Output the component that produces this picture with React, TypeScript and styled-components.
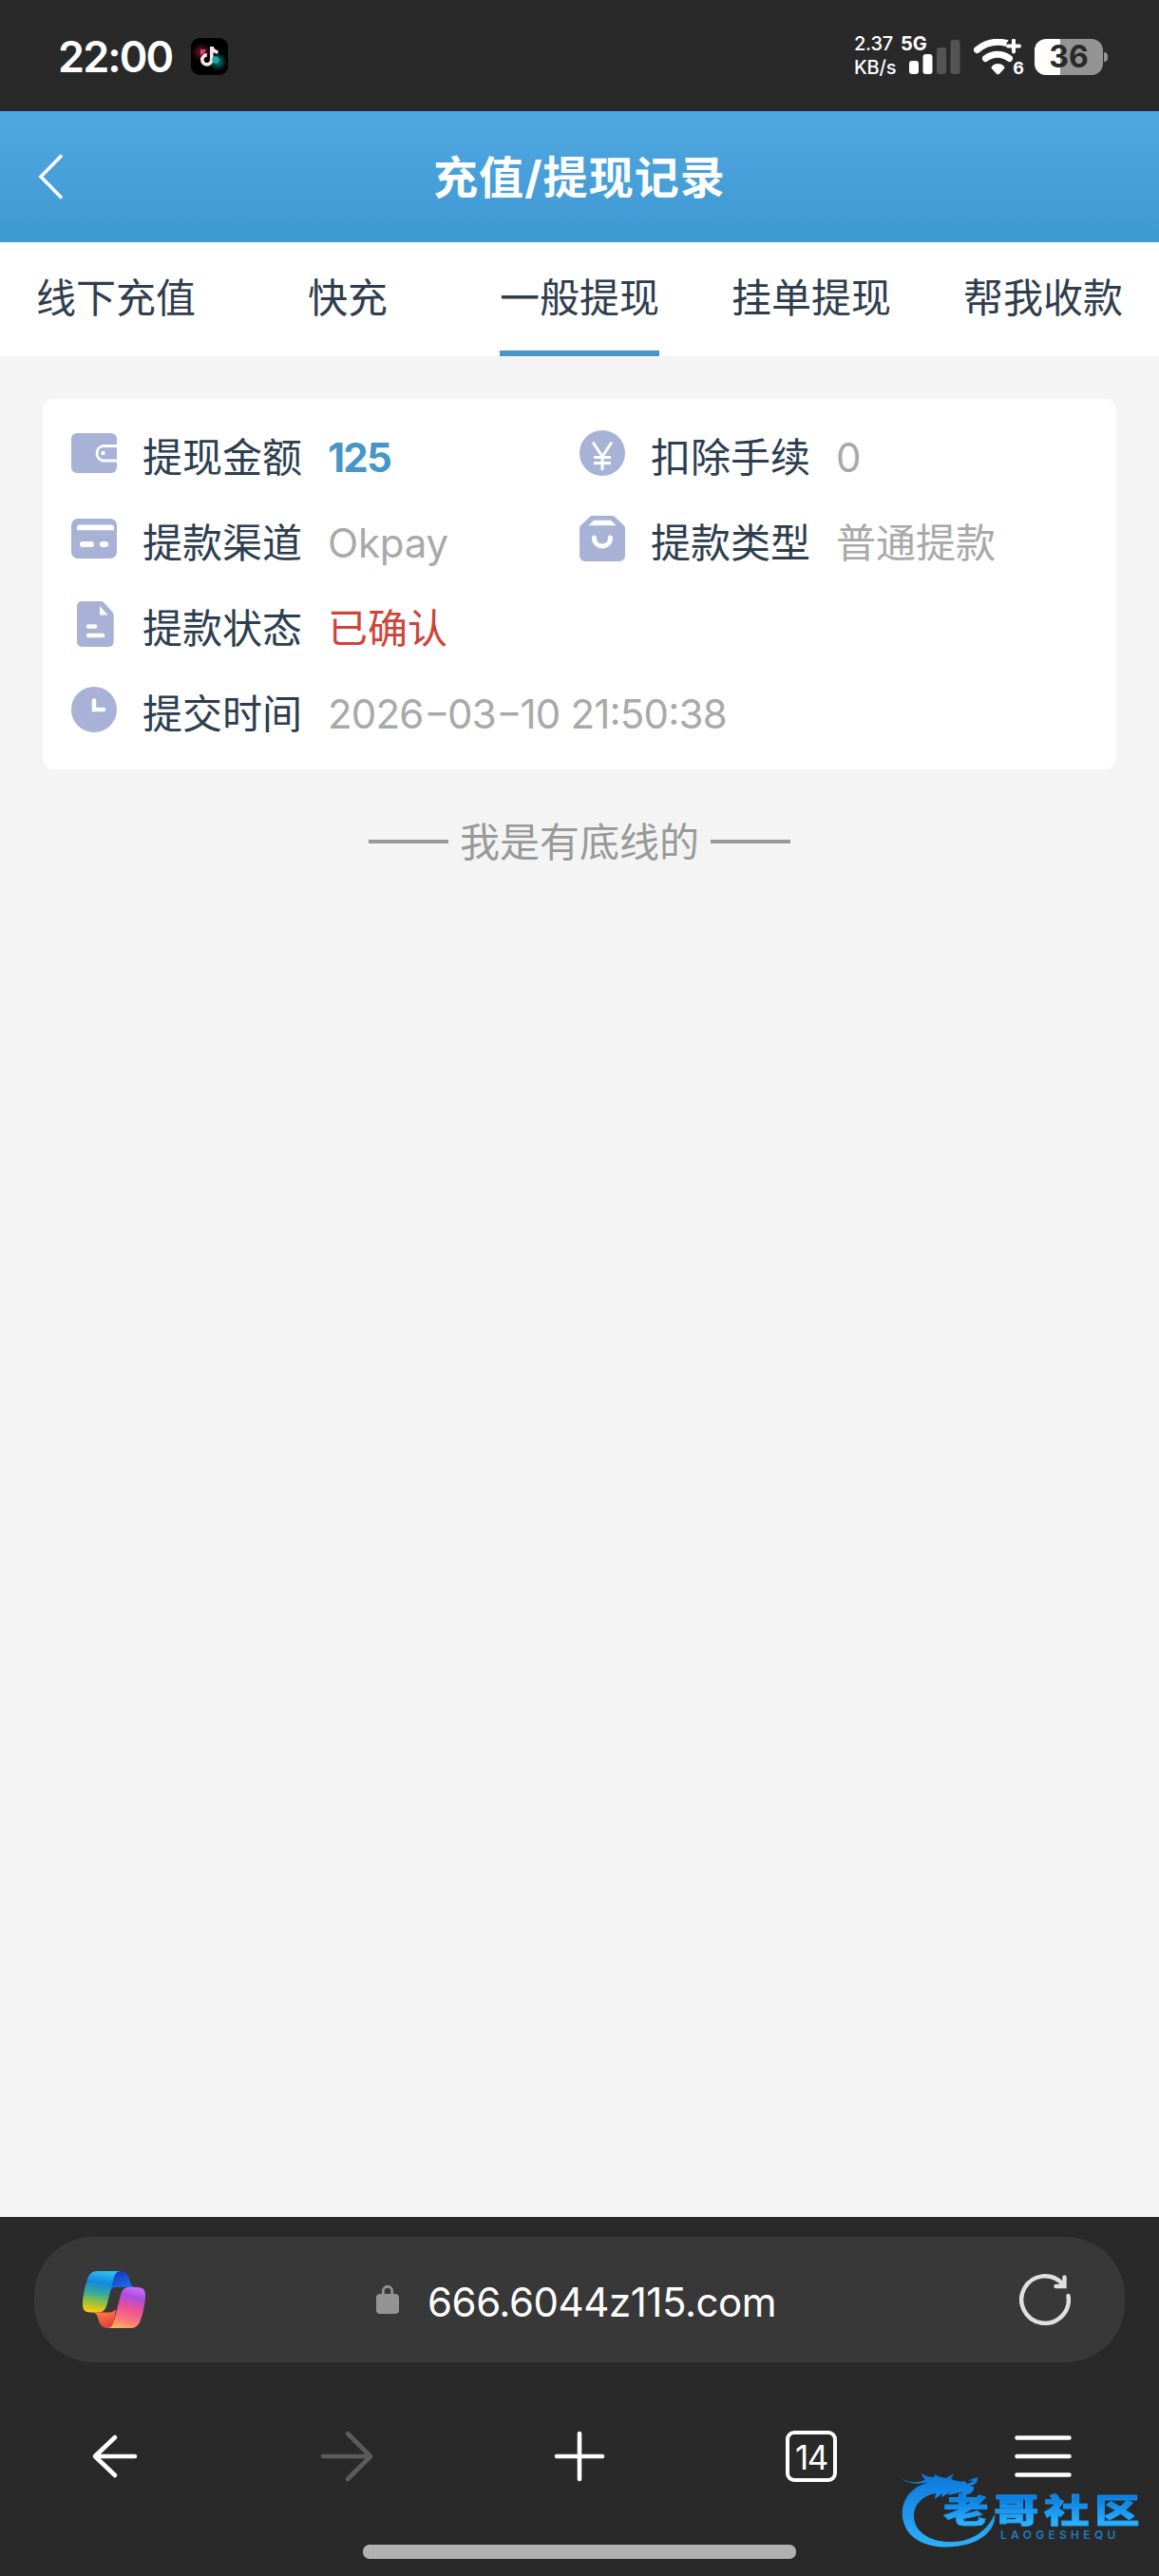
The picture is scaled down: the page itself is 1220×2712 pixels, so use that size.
import { Fragment } from "react";
import type { ReactNode } from "react";
import styled, { createGlobalStyle } from "styled-components";

const GlobalStyle = createGlobalStyle`
  body {
    margin: 0;
    background: #f4f4f4;
    font-family: Inter, "Noto Sans CJK SC", sans-serif;
  }
  * {
    box-sizing: border-box;
  }
  svg {
    display: block;
    flex: none;
  }
`;

const Screen = styled.div`
  display: flex;
  flex-direction: column;
  width: 1220px;
  height: 2712px;
  overflow: hidden;
  background: #f4f4f4;
`;

const StatusBar = styled.div`
  display: flex;
  align-items: center;
  height: 117px;
  padding: 2px 54px 0 61px;
  background: #292929;
  color: #fff;
`;

const Clock = styled.div`
  width: 140px;
  font-size: 45px;
  font-weight: 600;
  line-height: 60px;
  letter-spacing: -1.9px;
  white-space: nowrap;
`;

const StatusRight = styled.div`
  display: flex;
  align-items: center;
  margin-left: auto;
`;

const NetSpeed = styled.div`
  width: 58px;
  margin-top: -2px;
  font-size: 20px;
  font-weight: 500;
  line-height: 25px;
  letter-spacing: -0.2px;
  white-space: nowrap;
`;

const Signal = styled.div`
  position: relative;
  width: 54px;
  height: 38px;
  margin-right: 14px;
`;

const NetworkType = styled.span`
  position: absolute;
  left: -9px;
  top: -7px;
  font-size: 20px;
  font-weight: 700;
  line-height: 24px;
`;

const Wifi = styled.div`
  position: relative;
  width: 54px;
  height: 38px;
  margin-right: 10px;
`;

const WifiGeneration = styled.span`
  position: absolute;
  right: 1px;
  bottom: -4px;
  font-size: 18px;
  font-weight: 700;
  line-height: 22px;
`;

const Battery = styled.div`
  width: 72px;
  height: 38px;
  border-radius: 12px;
  background: linear-gradient(to right, #fff 27px, #949494 27px);
  color: #292929;
  font-size: 32px;
  font-weight: 700;
  line-height: 38px;
  text-align: center;
`;

const BatteryTip = styled.div`
  width: 4px;
  height: 10px;
  margin-left: 1px;
  border-radius: 0 5px 5px 0;
  background: #949494;
`;

const Header = styled.header`
  display: grid;
  grid-template-columns: 100px 1fr 100px;
  align-items: center;
  height: 138px;
  background: linear-gradient(#50a8e1, #3e98d1);
  color: #fff;
`;

const BackButton = styled.div`
  padding-left: 38px;
`;

const Title = styled.h1`
  margin: 0;
  padding-top: 2px;
  font-size: 47px;
  font-weight: 700;
  line-height: 60px;
  letter-spacing: 1.1px;
  text-align: center;
`;

const Tabs = styled.nav`
  display: grid;
  grid-template-columns: repeat(5, 1fr);
  justify-items: center;
  height: 120px;
  background: #fff;
`;

const Tab = styled.div<{ $active?: boolean }>`
  height: 120px;
  border-bottom: 6px solid ${({ $active }) => ($active ? "#4696c8" : "transparent")};
  color: #2f3d4e;
  font-size: 42px;
  line-height: 118px;
`;

const Content = styled.main`
  flex: 1;
  padding: 45px;
`;

const Card = styled.section`
  display: grid;
  grid-template-columns: 1fr 1fr;
  grid-auto-rows: 90px;
  height: 390px;
  padding: 15px 30px;
  border-radius: 12px;
  background: #fff;
`;

const Field = styled.div<{ $wide?: boolean }>`
  display: flex;
  align-items: center;
  grid-column: ${({ $wide }) => ($wide ? "span 2" : "auto")};
  padding-top: 4px;
  font-size: 42px;
  line-height: 60px;
  white-space: nowrap;
`;

const FieldIcon = styled.div`
  margin: 0 27px 10px 0;
`;

const Label = styled.span`
  width: 195px;
  color: #2c3e50;
`;

const Value = styled.span<{ $color?: string; $bold?: boolean; $spacing?: number }>`
  color: ${({ $color }) => $color || "#a9a9a9"};
  font-weight: ${({ $bold }) => ($bold ? 700 : 400)};
  letter-spacing: ${({ $spacing }) => $spacing || 0}px;
  font-feature-settings: "case";
`;

const Dash = styled.span`
  display: inline-block;
  padding: 0 3px 0 4px;
  transform: scaleX(1.4);
`;

const EndNote = styled.div`
  display: flex;
  align-items: center;
  justify-content: center;
  gap: 12px;
  margin-top: 47px;
  color: #999;
  font-size: 42px;
  line-height: 60px;
  &::before,
  &::after {
    content: "";
    width: 84px;
    height: 4px;
    margin-top: -2px;
    background: #999;
  }
`;

const Browser = styled.footer`
  position: relative;
  display: flex;
  flex-direction: column;
  align-items: center;
  height: 378px;
  padding-top: 21px;
  background: #292929;
  color: #fff;
`;

const AddressBar = styled.div`
  display: flex;
  align-items: center;
  width: 1148px;
  height: 132px;
  padding: 0 57px 0 51px;
  border-radius: 62px;
  background: #383838;
`;

const Address = styled.div`
  display: flex;
  flex: 1;
  align-items: center;
  padding-left: 243px;
`;

const Url = styled.span`
  padding: 6px 0 0 30px;
  font-size: 42px;
  line-height: 60px;
  letter-spacing: -0.45px;
`;

const Toolbar = styled.div`
  display: grid;
  grid-template-columns: repeat(5, 1fr);
  align-items: center;
  justify-items: center;
  width: 1220px;
  height: 140px;
  margin-top: 29px;
`;

const TabCount = styled.div`
  width: 54px;
  height: 54px;
  border: 4.5px solid #fff;
  border-radius: 9px;
  font-size: 35px;
  line-height: 48px;
  letter-spacing: -1.5px;
  text-align: center;
`;

const HomeIndicator = styled.div`
  width: 456px;
  height: 15px;
  margin-top: 23px;
  border-radius: 7px;
  background: #b1b1b1;
`;

const Watermark = styled.div`
  position: absolute;
  left: 948px;
  top: 260px;
  width: 256px;
  height: 92px;
`;

const WatermarkName = styled.div`
  position: absolute;
  left: 45px;
  top: 32px;
  height: 35px;
  transform: scaleX(1.36);
  transform-origin: left;
  background: linear-gradient(#0a80e4 15%, #2bb0fb 85%);
  background-clip: text;
  color: transparent;
  -webkit-text-stroke: 0.6px #1b96f0;
  font-size: 35px;
  font-weight: 900;
  line-height: 35px;
  letter-spacing: 4px;
  white-space: nowrap;
`;

const WatermarkLatin = styled.div`
  position: absolute;
  left: 105px;
  top: 68px;
  color: #1f7cc0;
  font-size: 12px;
  font-weight: 600;
  line-height: 13px;
  letter-spacing: 4.3px;
`;

const TikTokIcon = () => (
  <svg width="39" height="39" viewBox="0 0 39 39">
    <defs>
      <radialGradient id="red-glow">
        <stop offset="0" stopColor="#a51f45" />
        <stop offset="1" stopColor="#a51f45" stopOpacity="0" />
      </radialGradient>
      <radialGradient id="cyan-glow">
        <stop offset="0" stopColor="#0fa39d" />
        <stop offset="1" stopColor="#0fa39d" stopOpacity="0" />
      </radialGradient>
    </defs>
    <rect width="39" height="39" rx="9" fill="#000" />
    <circle cx="11" cy="15" r="10" fill="url(#red-glow)" opacity=".7" />
    <circle cx="28" cy="25" r="10" fill="url(#cyan-glow)" opacity=".8" />
    <path d="M10 12h6l-2 4-4 2z" fill="#d9436b" />
    <path
      d="M21.8 9v13.5a5 5 0 1 1-5-4.6M22 9.500c.8 3.200 3 5 6.500 5.500"
      fill="none"
      stroke="#f8e6ec"
      strokeWidth="3.6"
    />
    <circle cx="26" cy="23" r="3.700" fill="#16aaa3" />
  </svg>
);

const SignalBars = () => (
  <svg width="54" height="38" viewBox="0 0 54 38">
    <rect x="0" y="23" width="10" height="14" rx="3" fill="#fff" />
    <rect x="14.500" y="16" width="10" height="21" rx="3" fill="#fff" />
    <rect x="29" y="9" width="10" height="28" rx="3" fill="#545454" />
    <rect x="43.500" y="1" width="10" height="36" rx="3" fill="#545454" />
  </svg>
);

const WifiIcon = () => (
  <svg width="54" height="38" viewBox="0 0 54 38">
    <g fill="none" stroke="#fff" strokeLinecap="round">
      <path d="M3.500 11.500C13 3.500 24 1.800 35 4.500" strokeWidth="7" />
      <path d="M12.500 20.500c7.500-5.800 17.500-5.800 25 0" strokeWidth="7" />
    </g>
    <path
      d="M19.500 28.500c3.500-3.200 8.500-3.200 12 0 1.200 1.100 1.200 2 .3 3l-4.600 4.900c-1.200 1.200-2.200 1.200-3.400 0l-4.600-4.900c-.9-1-.9-1.900.3-3z"
      fill="#fff"
    />
    <circle cx="42" cy="7.500" r="8" fill="#292929" />
    <path d="M36 7.500h12M42 1.500v12" stroke="#fff" strokeWidth="4" strokeLinecap="round" />
  </svg>
);

const WalletIcon = () => (
  <svg width="48" height="48" viewBox="0 0 48 48">
    <rect y="3" width="48" height="42" rx="6" fill="#a8b2d7" />
    <path d="M48 16.500H33a8 8 0 0 0 0 15.500h15" fill="none" stroke="#fff" strokeWidth="2.8" />
    <circle cx="33.500" cy="24" r="2.200" fill="#fff" />
  </svg>
);

const YenIcon = () => (
  <svg width="48" height="48" viewBox="0 0 48 48">
    <circle cx="24" cy="24" r="24" fill="#a8b2d7" />
    <path
      d="M14 12.500l10 15 10-15M24 27.500V42M15 28.500h18M15 34.500h18"
      fill="none"
      stroke="#fff"
      strokeWidth="3"
    />
  </svg>
);

const BankCardIcon = () => (
  <svg width="48" height="48" viewBox="0 0 48 48">
    <rect y="3" width="48" height="42" rx="7" fill="#a8b2d7" />
    <path d="M6 15.200V12a2.500 2.500 0 0 1 2.500-2.500h34A2.500 2.500 0 0 1 45 12v3.200z" fill="#fff" />
    <path d="M12 30h9M33 30h3" stroke="#fff" strokeWidth="6" strokeLinecap="round" />
  </svg>
);

const BagIcon = () => (
  <svg width="48" height="48" viewBox="0 0 48 48">
    <path
      d="M14 0h20c1.500 0 2.500.5 3.500 1.500l9 8.500c1 1 1.500 2 1.500 3.500V42a6 6 0 0 1-6 6H6a6 6 0 0 1-6-6V13.500c0-1.500.5-2.500 1.500-3.500l9-8.500C11.500.5 12.500 0 14 0z"
      fill="#a8b2d7"
    />
    <path d="M15 4.800h18l5.500 5.400h-29z" fill="#fff" />
    <path d="M15.500 23c0 12 17 12 17 0" fill="none" stroke="#fff" strokeWidth="5" strokeLinecap="round" />
  </svg>
);

const DocumentIcon = () => (
  <svg width="48" height="48" viewBox="0 0 48 48">
    <path
      d="M11 0h20c1.500 0 2.500.5 3.500 1.500l9 10c.8 1 1.200 2 1.200 3.200V43a5 5 0 0 1-5 5H11a5 5 0 0 1-5-5V5a5 5 0 0 1 5-5z"
      fill="#a8b2d7"
    />
    <path d="M30 5v9.500h8.500z" fill="#fff" />
    <path d="M18 26.500h7M18 36h15" stroke="#fff" strokeWidth="4.5" strokeLinecap="round" />
  </svg>
);

const ClockIcon = () => (
  <svg width="48" height="48" viewBox="0 0 48 48">
    <circle cx="24" cy="24" r="24" fill="#a8b2d7" />
    <path d="M24 14.500V24h10" fill="none" stroke="#fff" strokeWidth="4.500" strokeLinecap="round" />
  </svg>
);

const CopilotIcon = () => (
  <svg width="66" height="60" viewBox="0 0 66 60">
    <defs>
      <linearGradient id="ribbon-left" x1=".55" y1="0" x2=".4" y2="1">
        <stop offset="0" stopColor="#31bdf3" />
        <stop offset=".28" stopColor="#1389df" />
        <stop offset=".55" stopColor="#37a99a" />
        <stop offset=".75" stopColor="#8dbf45" />
        <stop offset="1" stopColor="#fcc90c" />
      </linearGradient>
      <linearGradient id="ribbon-right" x1=".6" y1="0" x2=".35" y2="1">
        <stop offset="0" stopColor="#c96af0" />
        <stop offset=".2" stopColor="#a94ce4" />
        <stop offset=".5" stopColor="#ee5192" />
        <stop offset=".78" stopColor="#f9777c" />
        <stop offset="1" stopColor="#ffb156" />
      </linearGradient>
      <linearGradient id="fold-top" x1=".3" y1="0" x2=".8" y2="1">
        <stop offset="0" stopColor="#1437c4" />
        <stop offset="1" stopColor="#237be8" />
      </linearGradient>
      <linearGradient id="fold-bottom" x1=".2" y1="0" x2=".7" y2="1">
        <stop offset="0" stopColor="#ff8a4c" />
        <stop offset=".5" stopColor="#f7603e" />
        <stop offset="1" stopColor="#d8403c" />
      </linearGradient>
    </defs>
    <path d="M34 0h6c4.500 0 7.500 3 8.800 7l1.400 5c.8 2.800 2.500 4.700 5.800 5H38c-4 0-6 .5-9 3z" fill="url(#fold-top)" />
    <path d="M32 60h-6c-4.500 0-7.500-3-8.700-7l-1.400-4.500c-.9-3-2.600-4.800-5.900-5h16c4 0 6-.5 9-3z" fill="url(#fold-bottom)" />
    <path d="M15 0h25c-4.500 0-6.500 4-7.700 9l-6.600 26c-1.500 5.500-4 8.500-9.500 8.500H8C2 43.500 0 40 0 35 0 28 2 17 5 8.500 7 3 10 0 15 0z" fill="url(#ribbon-left)" />
    <path d="M51 60H26c4.500 0 6.200-4 7.500-9l6.500-26c1.500-5.500 4-8 9.500-8H58c6 0 8 3.500 8 8.500C66 33 64 43 61 51.500 59 57 56 60 51 60z" fill="url(#ribbon-right)" />
  </svg>
);

const LockIcon = () => (
  <svg width="24" height="30" viewBox="0 0 24 30">
    <rect y="9" width="24" height="21" rx="4" fill="#949494" />
    <path d="M7.300 11V6a4.700 4.700 0 0 1 9.400 0v5" fill="none" stroke="#949494" strokeWidth="2.800" />
  </svg>
);

const RefreshIcon = () => (
  <svg width="54" height="54" viewBox="0 0 54 54" fill="none" stroke="#e0e0e0" strokeLinecap="round">
    <path d="M51.500 23A24.800 24.800 0 1 1 45.500 10.500" strokeWidth="4.400" />
    <path d="M47.500 3.500v9.500H38.500" strokeWidth="4.400" />
  </svg>
);

const LineIcon = ({ d, color = "#fff" }: { d: string; color?: string }) => (
  <svg width="60" height="60" viewBox="0 0 60 60" fill="none" stroke={color} strokeWidth="4.600" strokeLinecap="round" strokeLinejoin="round">
    <path d={d} />
  </svg>
);

const DragonLogo = () => (
  <svg width="110" height="92" viewBox="0 0 110 92">
    <defs>
      <linearGradient id="dragon" x1="0" y1="0" x2="0" y2="1">
        <stop offset="0" stopColor="#0b78dc" />
        <stop offset="1" stopColor="#2db1fb" />
      </linearGradient>
    </defs>
    <path
      d="M1 15c7 5 14 5 22 3l3-2c-3-2-4-4-4-6 5 3 9 4 13 4l1-3c4 3 8 3 12 4l8-5-3 6c6 2 10 3 16 2l12-4c1 5-3 9-9 9l5 1c1 4-3 8-7 8l-8-2-12 3 2-3-9 5 1-4-8 6 1-6C23 33 13 44 14 56c1 17 19 27 41 26 20-1 35-10 44-29 2 12-8 24-24 30-22 8-51 6-65-9C-2 60-1 38 14 27c6-5 10-5 15-8-10 3-23 2-28-4z"
      fill="url(#dragon)"
    />
    <path d="M67 17l10 1-7 3z" fill="#292929" />
  </svg>
);

interface FieldData {
  icon: ReactNode;
  label: string;
  value: string;
  color?: string;
  bold?: boolean;
  wide?: boolean;
  spacing?: number;
}

const TABS = ["线下充值", "快充", "一般提现", "挂单提现", "帮我收款"];

const FIELDS: FieldData[] = [
  { icon: <WalletIcon />, label: "提现金额", value: "125", color: "#4696c8", bold: true, spacing: -1.8 },
  { icon: <YenIcon />, label: "扣除手续", value: "0" },
  { icon: <BankCardIcon />, label: "提款渠道", value: "Okpay", spacing: -0.2 },
  { icon: <BagIcon />, label: "提款类型", value: "普通提款" },
  { icon: <DocumentIcon />, label: "提款状态", value: "已确认", color: "#cf4439", wide: true },
  { icon: <ClockIcon />, label: "提交时间", value: "2026-03-10 21:50:38", wide: true, spacing: -0.8 },
];

function App() {
  return (
    <Screen>
      <GlobalStyle />
      <StatusBar>
        <Clock>22:00</Clock>
        <TikTokIcon />
        <StatusRight>
          <NetSpeed>
            2.37
            <br />
            KB/s
          </NetSpeed>
          <Signal>
            <NetworkType>5G</NetworkType>
            <SignalBars />
          </Signal>
          <Wifi>
            <WifiIcon />
            <WifiGeneration>6</WifiGeneration>
          </Wifi>
          <Battery>36</Battery>
          <BatteryTip />
        </StatusRight>
      </StatusBar>

      <Header>
        <BackButton>
          <svg width="32" height="50" viewBox="0 0 32 50">
            <path d="M27 2.500L5 25l22 22.500" fill="none" stroke="#fff" strokeWidth="3.600" />
          </svg>
        </BackButton>
        <Title>充值/提现记录</Title>
      </Header>

      <Tabs>
        {TABS.map(tab => (
          <Tab key={tab} $active={tab === "一般提现"}>
            {tab}
          </Tab>
        ))}
      </Tabs>

      <Content>
        <Card>
          {FIELDS.map(field => (
            <Field key={field.label} $wide={field.wide}>
              <FieldIcon>{field.icon}</FieldIcon>
              <Label>{field.label}</Label>
              <Value $color={field.color} $bold={field.bold} $spacing={field.spacing}>
                {field.value.split("-").map((part, index) => (
                  <Fragment key={index}>
                    {index > 0 && <Dash>-</Dash>}
                    {part}
                  </Fragment>
                ))}
              </Value>
            </Field>
          ))}
        </Card>
        <EndNote>我是有底线的</EndNote>
      </Content>

      <Browser>
        <AddressBar>
          <CopilotIcon />
          <Address>
            <LockIcon />
            <Url>666.6044z115.com</Url>
          </Address>
          <RefreshIcon />
        </AddressBar>
        <Toolbar>
          <LineIcon d="M50 30H9M29 10L8 30l21 20" />
          <LineIcon d="M4 30h50M30 6l24 24-24 24" color="#5c5c5c" />
          <LineIcon d="M30 6v48M6 30h48" />
          <TabCount>14</TabCount>
          <LineIcon d="M2.500 10.500h55M2.500 30h55M2.500 49.500h55" />
        </Toolbar>
        <HomeIndicator />
        <Watermark>
          <DragonLogo />
          <WatermarkName>老哥社区</WatermarkName>
          <WatermarkLatin>LAOGESHEQU</WatermarkLatin>
        </Watermark>
      </Browser>
    </Screen>
  );
}

export default App;
